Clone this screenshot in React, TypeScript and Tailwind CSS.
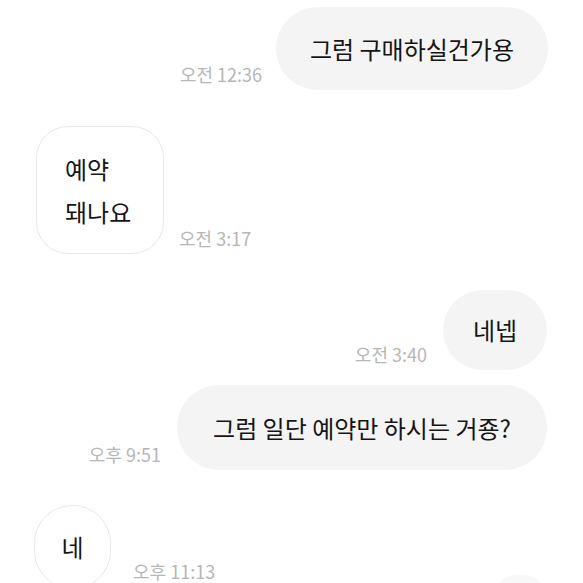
import React from 'react';

type Msg = {
    mine: boolean;
    lines: string[];
    time: string;
};

const messages: Msg[] = [
    { mine: true, lines: ['그럼 구매하실건가용'], time: '오전 12:36' },
    { mine: false, lines: ['예약', '돼나요'], time: '오전 3:17' },
    { mine: true, lines: ['네넵'], time: '오전 3:40' },
    { mine: true, lines: ['그럼 일단 예약만 하시는 거죵?'], time: '오후 9:51' },
    { mine: false, lines: ['네'], time: '오후 11:13' },
];

function Time({ children }: { children: string }) {
    return (
        <span className="mb-[5px] shrink-0 whitespace-nowrap text-[18px] leading-[22px] text-[#b6b6b6]">
            {children}
        </span>
    );
}

export default function App() {
    return (
        <div
            className="h-[583px] w-[583px] overflow-hidden bg-white pt-[7px] text-[#151515]"
            style={{ fontFamily: '"Noto Sans CJK KR", "Noto Sans", sans-serif' }}
        >
            <div className="flex flex-col">
                {/* 그럼 구매하실건가용 */}
                <div className="flex items-end justify-end gap-[14px] pr-[35px]">
                    <Time>{messages[0].time}</Time>
                    <div className="flex h-[83px] w-[272px] items-center justify-center rounded-[42px] bg-[#f4f4f4] text-[24px] leading-[30px]">
                        {messages[0].lines[0]}
                    </div>
                </div>

                {/* 예약 돼나요 */}
                <div className="mt-[36px] flex items-end gap-[15px] pl-[36px]">
                    <div className="flex w-[128px] flex-col rounded-[32px] border border-[#e8e8e8] bg-white px-[28px] py-[20px] text-[24px] leading-[43px]">
                        {messages[1].lines.map((l) => (
                            <span key={l}>{l}</span>
                        ))}
                    </div>
                    <Time>{messages[1].time}</Time>
                </div>

                {/* 네넵 */}
                <div className="mt-[36px] flex items-end justify-end gap-[16px] pr-[36px]">
                    <Time>{messages[2].time}</Time>
                    <div className="flex h-[80px] w-[104px] items-center justify-center rounded-[40px] bg-[#f4f4f4] text-[24px] leading-[30px]">
                        {messages[2].lines[0]}
                    </div>
                </div>

                {/* 그럼 일단 예약만 하시는 거죵? */}
                <div className="mt-[15px] flex items-end justify-end gap-[16px] pr-[36px]">
                    <Time>{messages[3].time}</Time>
                    <div className="flex h-[85px] w-[370px] items-center justify-center rounded-[42px] bg-[#f4f4f4] text-[24px] leading-[30px]">
                        {messages[3].lines[0]}
                    </div>
                </div>

                {/* 네 */}
                <div className="mt-[35px] flex items-start pl-[34px] pr-[38px]">
                    <div className="flex h-[84px] w-[77px] items-center justify-center rounded-[38px] border border-[#e8e8e8] bg-white text-[24px] leading-[30px]">
                        {messages[4].lines[0]}
                    </div>
                    <span className="ml-[22px] mt-[55px] whitespace-nowrap text-[18px] leading-[22px] text-[#b6b6b6]">
                        {messages[4].time}
                    </span>
                    <div className="ml-auto mt-[70px] h-[30px] w-[50px] rounded-t-[20px] bg-[#f8f8f8]" />
                </div>
            </div>
        </div>
    );
}
